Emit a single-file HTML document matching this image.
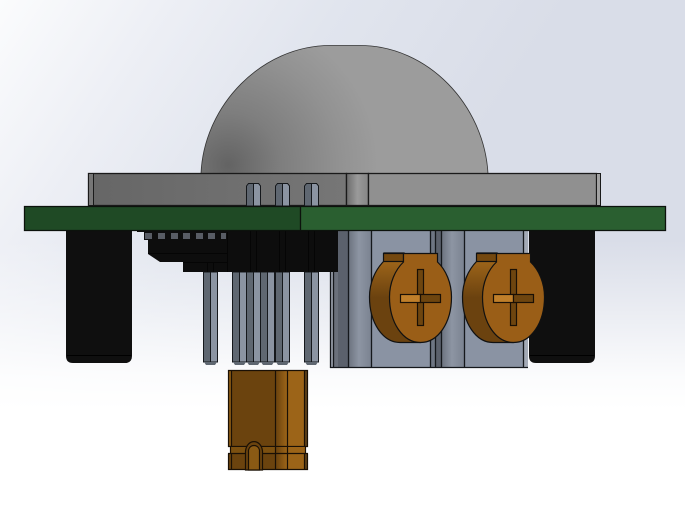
<!DOCTYPE html>
<html>
<head>
<meta charset="utf-8">
<style>
html,body{margin:0;padding:0;background:#fff;width:685px;height:526px;overflow:hidden}
svg{display:block}
</style>
</head>
<body>
<svg width="685" height="526" viewBox="0 0 685 526" xmlns="http://www.w3.org/2000/svg">
<defs>
<linearGradient id="bg" gradientUnits="userSpaceOnUse" x1="0" y1="0" x2="400" y2="260">
<stop offset="0" stop-color="#fbfcfd"/>
<stop offset=".3" stop-color="#edeff5"/>
<stop offset=".6" stop-color="#e1e5ee"/>
<stop offset="1" stop-color="#d9dde8"/>
</linearGradient>
<linearGradient id="fade" gradientUnits="userSpaceOnUse" x1="0" y1="240" x2="0" y2="410">
<stop offset="0" stop-color="#fff" stop-opacity="0"/>
<stop offset=".5" stop-color="#fff" stop-opacity=".55"/>
<stop offset=".8" stop-color="#fff" stop-opacity=".9"/>
<stop offset="1" stop-color="#fff" stop-opacity="1"/>
</linearGradient>
<radialGradient id="dome" gradientUnits="userSpaceOnUse" cx="228" cy="165" r="150">
<stop offset="0" stop-color="#636363"/>
<stop offset=".35" stop-color="#7e7e7e"/>
<stop offset=".75" stop-color="#929292"/>
<stop offset="1" stop-color="#9c9c9c"/>
</radialGradient>
<linearGradient id="hous" x1="0" y1="0" x2="1" y2="0">
<stop offset="0" stop-color="#666"/>
<stop offset="1" stop-color="#767676"/>
</linearGradient>
<linearGradient id="mid" x1="0" y1="0" x2="1" y2="0">
<stop offset="0" stop-color="#6c6c6c"/>
<stop offset=".5" stop-color="#9a9a9a"/>
<stop offset="1" stop-color="#858585"/>
</linearGradient>
<linearGradient id="hl" x1="0" y1="0" x2="1" y2="0">
<stop offset="0" stop-color="#6d7480"/>
<stop offset=".45" stop-color="#8d95a3"/>
<stop offset="1" stop-color="#7b8391"/>
</linearGradient>
<linearGradient id="edge" x1="0" y1="0" x2="0" y2="1">
<stop offset="0" stop-color="#a86c1c"/>
<stop offset=".5" stop-color="#6b420f"/>
<stop offset="1" stop-color="#6b420f"/>
</linearGradient>
<linearGradient id="cyl" x1="0" y1="0" x2="1" y2="0">
<stop offset="0" stop-color="#6b430e"/>
<stop offset="1" stop-color="#9c6418"/>
</linearGradient>
<g id="trim">
<path d="M384 261 C375 270 369.500 283 369.500 297 C369.500 323 383 342.500 400 342.500 L420 342.500 L420 262 L404 253 L384 253 Z" fill="url(#edge)" stroke="#111" stroke-width="1.200"/>
<rect x="383.500" y="253.500" width="20" height="8" fill="#74480f" stroke="#111" stroke-width="1.200"/>
<path d="M403.500 253.500 L437.500 253.500 L437.500 262 C446 270 451.500 283 451.500 297 C451.500 323 438 342.500 420.500 342.500 C403 342.500 389.500 323 389.500 297 C389.500 283 395 270 403.500 262 Z" fill="#9a5e17" stroke="#111" stroke-width="1.200"/>
<rect x="417.500" y="269.500" width="6" height="56" fill="#6e450f" stroke="#1a1005" stroke-width="1.200"/>
<rect x="400.500" y="294.500" width="20" height="8" fill="#c07f2a" stroke="#1a1005" stroke-width="1.200"/>
<rect x="420.500" y="294.500" width="20" height="8" fill="#6e450f" stroke="#1a1005" stroke-width="1.200"/>
</g>
</defs>

<rect width="685" height="526" fill="url(#bg)"/>
<rect width="685" height="526" fill="url(#fade)"/>

<!-- dome -->
<path d="M201 173.500 C204 105 262 45.500 330 45.500 L360 45.500 C428 45.500 484 105 488 173.500 Z" fill="url(#dome)" stroke="#333" stroke-width=".8"/>

<!-- housing -->
<rect x="88.500" y="173.500" width="258" height="32" fill="url(#hous)" stroke="#1a1a1a" stroke-width="1.300"/>
<rect x="88.500" y="173.500" width="5" height="32" fill="#767676" stroke="#1a1a1a" stroke-width="1"/>
<rect x="346.500" y="173.500" width="22" height="32" fill="url(#mid)" stroke="#1a1a1a" stroke-width="1.300"/>
<rect x="368.500" y="173.500" width="228" height="32" fill="#909090" stroke="#1a1a1a" stroke-width="1.300"/>
<rect x="596.500" y="173.500" width="4" height="32" fill="#a2a2a2" stroke="#1a1a1a" stroke-width="1"/>

<!-- upper pins -->
<g stroke="#15181c" stroke-width="1">
<path d="M246.500 206 V186 L248.500 183.500 H258.500 L260.500 186 V206 Z" fill="#5f6771"/>
<path d="M253.500 183.500 H258.500 L260.500 186 V206 H253.500 Z" fill="#8b94a2"/>
<path d="M275.500 206 V186 L277.500 183.500 H287.500 L289.500 186 V206 Z" fill="#5f6771"/>
<path d="M282.500 183.500 H287.500 L289.500 186 V206 H282.500 Z" fill="#8b94a2"/>
<path d="M304.500 206 V186 L306.500 183.500 H316.500 L318.500 186 V206 Z" fill="#5f6771"/>
<path d="M311.500 183.500 H316.500 L318.500 186 V206 H311.500 Z" fill="#8b94a2"/>
</g>

<!-- legs -->
<path d="M66 230 H132 V356 Q132 363 125 363 H73 Q66 363 66 356 Z" fill="#0f0f0f"/>
<path d="M67 355.500 H131" stroke="#000" stroke-width="1"/>
<path d="M529 230 H595 V356 Q595 363 588 363 H536 Q529 363 529 356 Z" fill="#0f0f0f"/>
<path d="M530 355.500 H594" stroke="#000" stroke-width="1"/>

<!-- metal block -->
<rect x="330" y="272" width="4" height="96" fill="#9aa1ad"/>
<rect x="334" y="272" width="4" height="96" fill="#6a707b"/>
<rect x="338" y="230" width="11" height="138" fill="#5b616c"/>
<rect x="349" y="230" width="22" height="138" fill="url(#hl)"/>
<rect x="371" y="230" width="60" height="138" fill="#8a93a3"/>
<rect x="431" y="230" width="5" height="138" fill="#6e7683"/>
<rect x="436" y="230" width="6" height="138" fill="#5b616c"/>
<rect x="442" y="230" width="22" height="138" fill="url(#hl)"/>
<rect x="464" y="230" width="60" height="138" fill="#8a93a3"/>
<rect x="524" y="230" width="4" height="138" fill="#a3aab6"/>
<path d="M333.500 272 V368 M348.500 230 V368 M371.500 230 V368 M430.500 230 V368 M435.500 230 V368 M441.500 230 V368 M464.500 230 V368 M523.500 230 V368 M330.500 272 V368 M330 367.500 H528" stroke="#15181c" stroke-width="1.300" fill="none"/>

<!-- lower pins -->
<g stroke="#15181c" stroke-width="1">
<rect x="203.500" y="272" width="7" height="90" fill="#5f6771"/><rect x="210.500" y="272" width="7" height="90" fill="#8b94a2"/>
<rect x="232.500" y="272" width="7" height="90" fill="#5f6771"/><rect x="239.500" y="272" width="7" height="90" fill="#8b94a2"/>
<rect x="246.500" y="272" width="7" height="90" fill="#5f6771"/><rect x="253.500" y="272" width="7" height="90" fill="#8b94a2"/>
<rect x="260.500" y="272" width="7" height="90" fill="#5f6771"/><rect x="267.500" y="272" width="7" height="90" fill="#8b94a2"/>
<rect x="275.500" y="272" width="7" height="90" fill="#5f6771"/><rect x="282.500" y="272" width="7" height="90" fill="#8b94a2"/>
<rect x="304.500" y="272" width="7" height="90" fill="#5f6771"/><rect x="311.500" y="272" width="7" height="90" fill="#8b94a2"/>
</g>
<g fill="#5f6771">
<path d="M204 362 H217 L215 365 H206 Z"/><path d="M233 362 H246 L244 365 H235 Z"/><path d="M247 362 H260 L258 365 H249 Z"/><path d="M261 362 H274 L272 365 H263 Z"/><path d="M276 362 H289 L287 365 H278 Z"/><path d="M305 362 H318 L316 365 H307 Z"/>
</g>

<!-- black connector -->
<path d="M148 230 H338 V272 H183 V262 H160 L148 254 Z" fill="#0d0d0d"/>
<path d="M148 253.500 H227 M183 262.500 H227 M207.500 262 V272 M213.500 262 V272 M227.500 232 V272 M250.500 230 V272 M256.500 230 V272 M279.500 230 V272 M285.500 230 V272 M308.500 230 V272 M314.500 230 V272" stroke="#050505" stroke-width="1" fill="none"/>
<rect x="137" y="230" width="90" height="2" fill="#0d0d0d"/>
<g fill="#585c64" stroke="#0d0d0d" stroke-width="1">
<rect x="144.500" y="232.500" width="8" height="7"/>
<rect x="157.500" y="232.500" width="8" height="7"/>
<rect x="170.500" y="232.500" width="8" height="7"/>
<rect x="182.500" y="232.500" width="8" height="7"/>
<rect x="195.500" y="232.500" width="8" height="7"/>
<rect x="207.500" y="232.500" width="8" height="7"/>
<rect x="220.500" y="232.500" width="6" height="7"/>
</g>

<!-- PCB -->
<rect x="24" y="206" width="277" height="24" fill="#1f4a25"/>
<rect x="301" y="206" width="364" height="24" fill="#2a5f30"/>
<path d="M24.500 230.500 V206.500 H665.500 V230.500 Z M300.500 206 V230" stroke="#0c120c" stroke-width="1.300" fill="none"/>

<!-- trimmers -->
<use href="#trim"/>
<use href="#trim" x="93"/>

<!-- bottom part -->
<rect x="228" y="370" width="48" height="76" fill="#6b430e"/>
<rect x="276" y="370" width="11" height="76" fill="url(#cyl)"/>
<rect x="287" y="370" width="18" height="76" fill="#9c6418"/>
<rect x="305" y="370" width="3" height="76" fill="#5e4018"/>
<rect x="228" y="370" width="3" height="76" fill="#8a5a14"/>
<path d="M228.500 370.500 H307.500 V446.500 H228.500 Z M231.500 370 V446 M275.500 370 V446 M287.500 370 V446 M304.500 370 V446" fill="none" stroke="#1a1005" stroke-width="1.200"/>
<rect x="230" y="447" width="76" height="7" fill="#7c5010"/>
<rect x="228" y="454" width="48" height="16" fill="#6b430e"/>
<rect x="276" y="447" width="11" height="23" fill="url(#cyl)"/>
<rect x="287" y="447" width="18" height="23" fill="#9c6418"/>
<rect x="305" y="454" width="3" height="16" fill="#5e4018"/>
<path d="M245.500 470 V451 C247 438.500 261 438.500 262.500 451 V470 Z" fill="#6b430e" stroke="#1a1005" stroke-width="1.200"/>
<path d="M248.500 470 V450 C250 444 258 444 259.500 450 V470 Z" fill="#8a5a14" stroke="#1a1005" stroke-width="1.200"/>
<path d="M230.500 446 V453.500 M305.500 446 V453.500 M228 453.500 H245 M263 453.500 H308 M228.500 453.500 V469.500 H245 M263 469.500 H307.500 V453.500 M231.500 454 V470 M275.500 447 V470 M287.500 447 V470 M304.500 454 V470" fill="none" stroke="#1a1005" stroke-width="1.200"/>
</svg>
</body>
</html>
